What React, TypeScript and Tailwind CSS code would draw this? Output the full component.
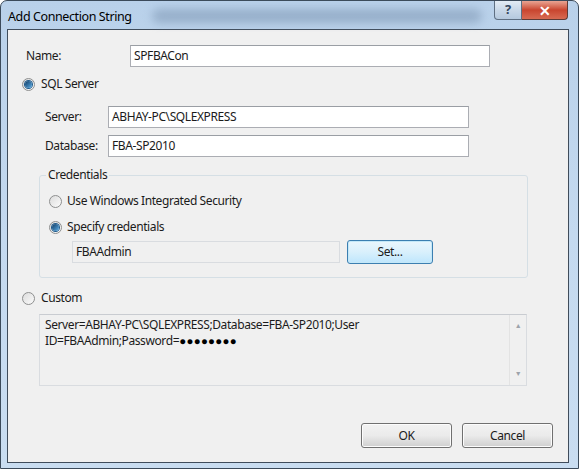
import React from 'react'

const font = { fontFamily: '"Segoe UI", "Noto Sans", "Open Sans", sans-serif' }

function Radio({ checked }: { checked?: boolean }) {
  return (
    <span className="flex h-[13px] w-[13px] shrink-0 items-center justify-center rounded-full border border-[#8e8f8f] bg-gradient-to-br from-[#dcdcdc] to-[#fbfbfb]">
      {checked && (
        <span className="h-[7px] w-[7px] rounded-full bg-gradient-to-br from-[#0f3d67] to-[#5fb0e8] shadow-[0_0_0_1px_#1e5a8c]" />
      )}
    </span>
  )
}

function TextBox({ value, className = '' }: { value: string; className?: string }) {
  return (
    <div
      className={`flex h-[22px] items-center border border-[#abadb3] border-t-[#9a9ea4] bg-white px-[3px] text-[12px] text-[#1b1b1b] ${className}`}
    >
      {value}
    </div>
  )
}

function Button({ label, focused, className = '' }: { label: string; focused?: boolean; className?: string }) {
  return (
    <div
      className={`flex items-center justify-center rounded-[3px] border text-[12px] text-[#1b1b1b] ${
        focused
          ? 'border-[#3c7fb1] bg-gradient-to-b from-[#eaf6fd] via-[#d9f0fc] to-[#bee6fd] shadow-[inset_0_0_0_1px_#c4e8f8]'
          : 'border-[#707070] bg-gradient-to-b from-[#f2f2f2] via-[#ebebeb] to-[#cfcfcf] shadow-[inset_0_0_0_1px_#fcfcfc]'
      } ${className}`}
    >
      {label}
    </div>
  )
}

export default function App() {
  return (
    <div className="h-[469px] w-[580px] overflow-hidden bg-white tracking-[-0.4px]" style={font}>
      <div className="flex h-[469px] w-[579px] flex-col rounded-t-[7px] border border-[#3b4a5a] bg-gradient-to-b from-[#b9d1ea] via-[#c4d9ef] to-[#c9ddf1]">
        {/* title bar */}
        <div className="flex h-[28px] shrink-0 items-start">
          <div className="mt-[7px] pl-[7px] text-[12.5px] text-black">Add Connection String</div>
          <div className="ml-[20px] mt-[8px] h-[14px] w-[330px] rounded-full bg-[#7f98b5] opacity-60 blur-[5px]" />
          <div className="ml-auto mr-[10px] flex h-[19px]">
            <div className="flex w-[28px] items-center justify-center rounded-bl-[4px] border border-t-0 border-[#5e6f82] bg-gradient-to-b from-[#e3ecf5] via-[#c9d8e8] to-[#b5c9de] text-[13px] font-bold text-[#33475e]">
              ?
            </div>
            <div className="flex w-[46px] items-center justify-center rounded-br-[4px] border border-l-0 border-t-0 border-[#5e3b36] bg-gradient-to-b from-[#e8a493] via-[#c9452f] to-[#d76a52] text-[14px] font-bold text-white">
              ✕
            </div>
          </div>
        </div>

        {/* client area */}
        <div className="mb-[5px] ml-[6px] mr-[9px] flex flex-1 flex-col border border-[#3f4c5b] bg-[#f0f0f0] text-[12px] text-[#1b1b1b]">
          <div className="mt-[15px] flex h-[22px] items-center pl-[18px]">
            <span className="w-[104px]">Name:</span>
            <TextBox value="SPFBACon" className="w-[360px]" />
          </div>

          <div className="mt-[9px] flex h-[16px] items-center gap-[6px] pl-[14px]">
            <Radio checked />
            <span>SQL Server</span>
          </div>

          <div className="mt-[14px] flex h-[22px] items-center pl-[37px]">
            <span className="w-[63px]">Server:</span>
            <TextBox value="ABHAY-PC\SQLEXPRESS" className="w-[361px]" />
          </div>
          <div className="mt-[7px] flex h-[22px] items-center pl-[37px]">
            <span className="w-[63px]">Database:</span>
            <TextBox value="FBA-SP2010" className="w-[361px]" />
          </div>

          {/* credentials group */}
          <div className="relative ml-[31px] mt-[18px] h-[103px] w-[489px] rounded-[3px] border border-[#d5dfe5]">
            <span className="absolute -top-[9px] left-[6px] bg-[#f0f0f0] px-[2px] leading-[16px]">Credentials</span>
            <div className="mt-[17px] flex h-[16px] items-center gap-[5px] pl-[9px]">
              <Radio />
              <span>Use Windows Integrated Security</span>
            </div>
            <div className="mt-[10px] flex h-[16px] items-center gap-[5px] pl-[9px]">
              <Radio checked />
              <span>Specify credentials</span>
            </div>
            <div className="mt-[5px] flex items-center pl-[32px]">
              <div className="flex h-[22px] w-[268px] items-center border border-[#d9dce0] bg-[#f0f0f0] px-[3px]">
                FBAAdmin
              </div>
              <Button label="Set..." focused className="ml-[7px] h-[24px] w-[86px]" />
            </div>
          </div>

          <div className="mt-[12px] flex h-[16px] items-center gap-[6px] pl-[14px]">
            <Radio />
            <span>Custom</span>
          </div>

          <div className="ml-[31px] mt-[8px] flex h-[72px] w-[488px] border border-[#d9dce0] border-t-[#c9ccd1]">
            <div className="flex-1 px-[5px] pt-[2px] leading-[16px]">
              Server=ABHAY-PC\SQLEXPRESS;Database=FBA-SP2010;User
              <br />
              ID=FBAAdmin;Password=<span className="text-[11.5px] tracking-[0.3px] text-black">●●●●●●●●</span>
            </div>
            <div className="flex w-[17px] flex-col items-center justify-between border-l border-[#e3e3e3] py-[6px] text-[7px] text-[#9da3aa]">
              <span>▲</span>
              <span>▼</span>
            </div>
          </div>

          <div className="mr-[15px] mt-auto mb-[14px] flex justify-end gap-[10px]">
            <Button label="OK" className="h-[25px] w-[91px]" />
            <Button label="Cancel" className="h-[25px] w-[91px]" />
          </div>
        </div>
      </div>
    </div>
  )
}
